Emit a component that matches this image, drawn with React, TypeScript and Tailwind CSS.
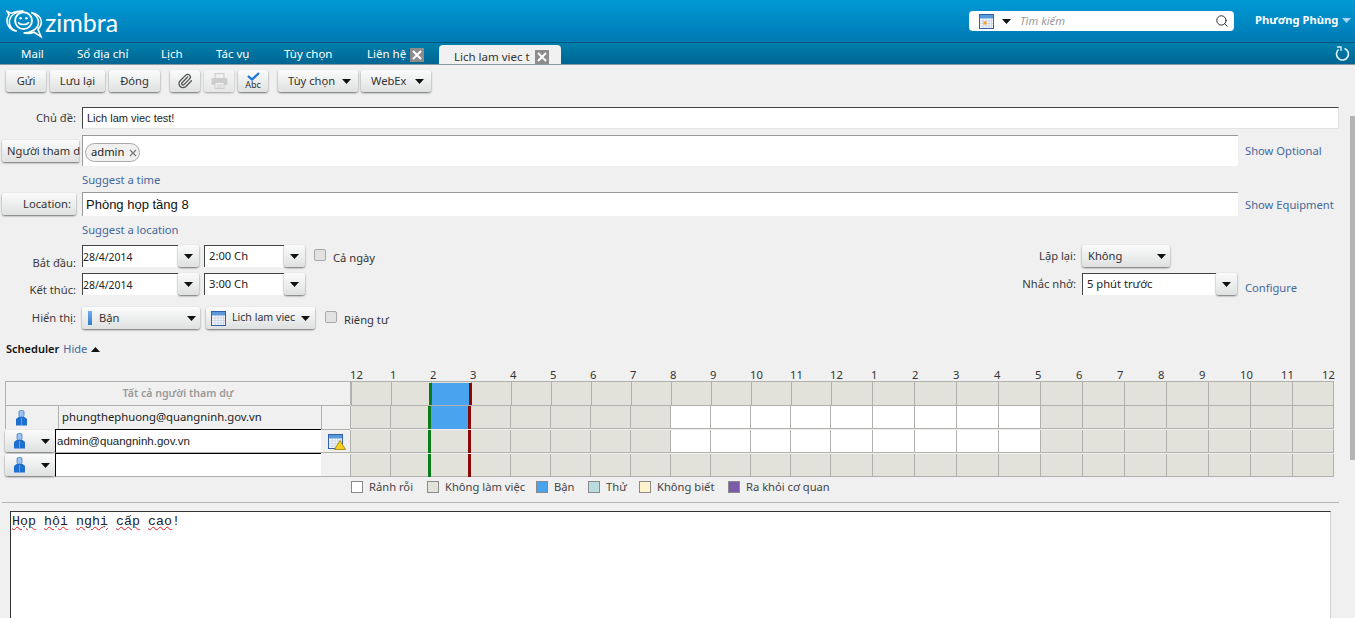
import { Paperclip, Search } from 'lucide-react'
import type { ReactNode } from 'react'

const UI = "font-['Noto_Sans',sans-serif]"

const HOURS = [
  '12', '1', '2', '3', '4', '5', '6', '7', '8', '9', '10', '11',
  '12', '1', '2', '3', '4', '5', '6', '7', '8', '9', '10', '11', '12',
]

const LEGEND = [
  { label: 'Rảnh rỗi', box: 'bg-white', width: 'w-[76px]' },
  { label: 'Không làm việc', box: 'bg-[#e3e2da]', width: 'w-[109px]' },
  { label: 'Bận', box: 'bg-[#4aa3ee]', width: 'w-[52px]' },
  { label: 'Thử', box: 'bg-[#b8dce0]', width: 'w-[51px]' },
  { label: 'Không biết', box: 'bg-[#fdf3cd]', width: 'w-[89px]' },
  { label: 'Ra khỏi cơ quan', box: 'bg-[#7a5cab]', width: 'w-[120px]' },
]

function Caret({ color = '#111' }: { color?: string }) {
  return (
    <svg width="9" height="5" viewBox="0 0 9 5" className="shrink-0">
      <polygon points="0,0 9,0 4.5,5" fill={color} />
    </svg>
  )
}

function CloseBox() {
  return (
    <span className="flex h-[14px] w-[14px] shrink-0 items-center justify-center bg-[#8c8c8c]">
      <svg width="10" height="10" viewBox="0 0 10 10">
        <path d="M1 1l8 8M9 1l-8 8" stroke="#fff" strokeWidth="2" />
      </svg>
    </span>
  )
}

function Btn({ children, className = '' }: { children: ReactNode; className?: string }) {
  return (
    <div
      className={`flex h-[22px] items-center rounded-[3px] bg-gradient-to-b from-[#fbfbfb] to-[#dfe1e1] text-[11.2px] text-[#333] shadow-[0_1px_2px_rgba(0,0,0,0.55)] ${className}`}
    >
      {children}
    </div>
  )
}

function Label({ children, className = '' }: { children: ReactNode; className?: string }) {
  return (
    <div className={`w-[76px] shrink-0 text-right text-[11.2px] leading-[16px] text-[#3a3a3a] ${className}`}>
      {children}
    </div>
  )
}

function Link({ children, className = '' }: { children: ReactNode; className?: string }) {
  return <div className={`text-[11.2px] leading-[16px] text-[#44689c] ${className}`}>{children}</div>
}

function ComboInput({ value, width, text = 'text-[11.2px] pb-[1px]' }: { value: string; width: string; text?: string }) {
  return (
    <div className="flex h-[22px] items-start">
      <div
        className={`flex h-[22px] items-center border-l border-t border-l-[#444] border-t-[#444] bg-white text-[#222] ${text} ${width}`}
      >
        {value}
      </div>
      <Btn className="w-[21px] justify-center">
        <Caret />
      </Btn>
    </div>
  )
}

function Checkbox({ className = '' }: { className?: string }) {
  return (
    <div className={`h-[12px] w-[12px] rounded-[2px] border border-[#a8a8a8] bg-[#e2e2e2] ${className}`} />
  )
}

function CalendarIcon({ size = 15, dot = false }: { size?: number; dot?: boolean }) {
  return (
    <svg width={size} height={size} viewBox="0 0 15 15" className="shrink-0">
      <rect x="0.5" y="0.5" width="14" height="14" fill="#f4f6fa" stroke="#2f62a8" />
      <rect x="1" y="1" width="13" height="3.5" fill="#5b9ad8" />
      <path d="M1 7h13M1 9.5h13M1 12h13M4 5v9M7 5v9M10 5v9M12.5 5v9" stroke="#c9d3e2" strokeWidth="0.8" />
      {dot && <rect x="4.5" y="7.5" width="3" height="3" fill="#f0a020" />}
    </svg>
  )
}

function PersonIcon() {
  return (
    <svg width="13" height="16" viewBox="0 0 13 16" className="shrink-0">
      <rect x="4" y="0.5" width="5" height="6.5" rx="1.5" fill="#9cc3ee" stroke="#3f7fc8" strokeWidth="0.8" />
      <path d="M3.5 7h6l2.5 2v6.5H1V9z" fill="#1f6fd0" />
      <path d="M6.5 8v7.5" stroke="#5ea1e8" strokeWidth="1" />
    </svg>
  )
}

function PrinterIcon() {
  return (
    <svg width="17" height="16" viewBox="0 0 17 16">
      <rect x="4" y="0.5" width="9" height="5" fill="#f0f0f0" stroke="#b5b5b5" />
      <rect x="0.5" y="5" width="16" height="7" rx="1.5" fill="#b5b5b5" />
      <rect x="4" y="9.5" width="9" height="6" fill="#f3f3f3" stroke="#b5b5b5" />
      <path d="M5.5 12h6M5.5 14h6" stroke="#b5b5b5" />
    </svg>
  )
}

function Logo() {
  return (
    <svg width="37" height="29" viewBox="0 0 38 30" fill="none" stroke="#fff" className="shrink-0">
      <path d="M1 1.5l4.5 2C9 1.2 14 .8 18 1c-7 .8-13.5 4-14.5 9.5C2.500 16 6 20.500 11 22 5.500 21.500 1 17 .8 11.500.7 8 2.200 6.200 3 5z" strokeWidth="1.6" />
      <circle cx="18" cy="11" r="8.7" strokeWidth="2" />
      <path d="M26 2.500c6 1 10.500 5 10.500 10 0 3-1.500 5.500-3.500 7.500l3 7.500-7-4.500c-3 1.200-7 1.500-11 .8 8-.2 14.500-4 15.500-10 .7-5-3-9.500-7.500-11.300z" strokeWidth="1.6" />
      <circle cx="15" cy="8.500" r="1.3" fill="#fff" stroke="none" />
      <circle cx="21" cy="8.500" r="1.3" fill="#fff" stroke="none" />
      <path d="M12.500 12.500c1.500 3.300 9.500 3.300 11 0" strokeWidth="1.6" />
    </svg>
  )
}

// header row sits 1px to the right of the rows below and absorbs it in cell 12
function ScheduleRow({
  free = false,
  busy = false,
  header = false,
}: {
  free?: boolean
  busy?: boolean
  header?: boolean
}) {
  const cells = Array.from({ length: 24 }, (_, i) => i)
  const barPos = header ? 'top-[1px] h-[22px]' : 'top-0 h-[23px]'
  return (
    <div className={`relative flex h-[24px] ${header ? 'ml-[1px]' : 'pb-[1px]'}`}>
      {cells.map((i) => {
        const isFree = free && i >= 8 && i < 17
        const w = i < 12 ? 'w-[40px]' : header && i === 12 ? 'w-[41px]' : 'w-[42px]'
        return (
          <div
            key={i}
            className={`shrink-0 border-b border-l border-[#b0b0ac] ${w} ${i === 23 ? 'border-r' : ''} ${
              isFree ? 'bg-white' : 'bg-[#e3e2da]'
            }`}
          />
        )
      })}
      {busy && <div className={`absolute left-[81px] w-[37px] bg-[#4aa3ee] ${barPos}`} />}
      <div className={`absolute left-[78px] w-[3px] bg-[#0a7d18] ${barPos}`} />
      <div className={`absolute left-[118px] w-[3px] bg-[#8b0808] ${barPos}`} />
    </div>
  )
}

function PersonButton() {
  return (
    <Btn className="mt-[1px] w-[50px] pl-[8px]">
      <PersonIcon />
      <span className="ml-[15px]">
        <Caret />
      </span>
    </Btn>
  )
}

export default function App() {
  return (
    <div className={`flex h-[618px] flex-col overflow-hidden bg-[#f0f0f0] ${UI}`}>
      {/* top bar */}
      <header className="flex h-[43px] shrink-0 items-start border-b border-[#05587f] bg-gradient-to-b from-[#0099d6] to-[#007ab3] pl-[6px]">
        <div className="mt-[10px] flex items-start">
          <Logo />
          <span className="ml-[2px] mt-[-3px] font-['Lato',sans-serif] text-[25px] leading-[30px] text-white">
            zimbra
          </span>
        </div>
        <div className="ml-auto mt-[11px] flex h-[20px] w-[265px] items-center rounded-[4px] bg-white pl-[10px] pr-[5px]">
          <CalendarIcon dot />
          <span className="ml-[8px]">
            <Caret />
          </span>
          <span className="ml-[9px] text-[11.2px] italic text-[#999]">Tìm kiếm</span>
          <Search size={14} strokeWidth={1.6} className="ml-auto text-[#222]" />
        </div>
        <span className="ml-[21px] mt-[12px] w-[87px] text-[11.2px] font-bold leading-[16px] text-white">
          Phương Phùng
        </span>
        <span className="mr-[4px] mt-[18px]">
          <Caret color="#a9d6ec" />
        </span>
      </header>

      {/* app tabs */}
      <nav className="flex h-[22px] shrink-0 items-end border-b border-[#8a9aa4] bg-gradient-to-b from-[#007fab] to-[#006593] text-[11.5px] text-white">
        <span className="mb-[2px] ml-[21px] w-[56px]">Mail</span>
        <span className="mb-[2px] w-[84px]">Sổ địa chỉ</span>
        <span className="mb-[2px] w-[55px]">Lịch</span>
        <span className="mb-[2px] w-[68px]">Tác vụ</span>
        <span className="mb-[2px] w-[83px]">Tùy chọn</span>
        <span className="mb-[2px] w-[43px]">Liên hệ</span>
        <span className="mb-[2px]">
          <CloseBox />
        </span>
        <div className="ml-[15px] flex h-[19px] w-[122px] items-center rounded-t-[4px] bg-[#f0f0f0] pl-[15px] pt-[5px] text-[#333]">
          <span className="w-[81px] whitespace-nowrap">Lich lam viec t</span>
          <CloseBox />
        </div>
        <svg width="15" height="15" viewBox="0 0 15 15" fill="none" className="mb-[3px] ml-auto mr-[5px]">
          <path d="M9.5 2.400A6 6 0 1 1 3.500 3.500" stroke="#e8f4fa" strokeWidth="1.6" />
          <path d="M2 1h4v4" stroke="#e8f4fa" strokeWidth="1.3" />
        </svg>
      </nav>

      <div className="flex min-h-0 flex-1">
        <main className="flex w-[1350px] shrink-0 flex-col">
          {/* toolbar */}
          <div className="mt-[5px] flex h-[22px] items-center pl-[6px]">
            <Btn className="w-[40px] justify-center">Gửi</Btn>
            <Btn className="ml-[4px] w-[55px] justify-center">Lưu lại</Btn>
            <Btn className="ml-[4px] w-[51px] justify-center">Đóng</Btn>
            <Btn className="ml-[10px] w-[30px] justify-center">
              <Paperclip size={16} className="text-[#555]" />
            </Btn>
            <Btn className="ml-[4px] w-[30px] justify-center opacity-60">
              <PrinterIcon />
            </Btn>
            <Btn className="ml-[4px] w-[30px] flex-col justify-center">
              <svg width="13" height="9" viewBox="0 0 13 9" className="mb-[-2px]">
                <path d="M1 4l4 3.500L12 1" fill="none" stroke="#1a73dd" strokeWidth="2.2" />
              </svg>
              <span className="text-[9px] leading-[11px]">Abc</span>
            </Btn>
            <Btn className="ml-[10px] w-[80px] justify-between pl-[10px] pr-[7px]">
              <span>Tùy chọn</span>
              <Caret />
            </Btn>
            <Btn className="ml-[3px] w-[70px] justify-between pl-[10px] pr-[7px]">
              <span>WebEx</span>
              <Caret />
            </Btn>
          </div>

          {/* subject */}
          <div className="mt-[15px] flex h-[22px] items-center gap-[6px]">
            <Label>Chủ đề:</Label>
            <div className="flex h-[22px] w-[1257px] items-center border border-[#e3e3e3] border-l-[#444] border-t-[#444] bg-white pl-[4px] font-['Liberation_Sans',sans-serif] text-[11px] text-[#222]">
              Lich lam viec test!
            </div>
          </div>

          {/* attendees */}
          <div className="mt-[6px] flex h-[31px] items-start">
            <Btn className="ml-[2px] mt-[5px] w-[77px] rounded-r-none whitespace-nowrap pl-[5px]">Người tham d</Btn>
            <div className="ml-[3px] flex h-[31px] w-[1156px] items-start border-l border-t border-[#999] bg-white pl-[2px] pt-[7px]">
              <div className="flex h-[19px] w-[55px] items-center rounded-[10px] border border-[#aaa] bg-[#f0f0f0] pl-[5px] text-[11.2px] text-[#222]">
                admin
                <svg width="8" height="8" viewBox="0 0 8 8" className="ml-[5px]">
                  <path d="M1 1l6 6M7 1L1 7" stroke="#777" strokeWidth="1.2" />
                </svg>
              </div>
            </div>
            <Link className="ml-[7px] mt-[8px]">Show Optional</Link>
          </div>
          <Link className="ml-[82px] mt-[6px]">Suggest a time</Link>

          {/* location */}
          <div className="mt-[4px] flex h-[24px] items-start">
            <Btn className="ml-[2px] mt-[1px] w-[74px] justify-end pr-[5px]">Location:</Btn>
            <div className="ml-[6px] flex h-[24px] w-[1156px] items-center border-l border-t border-[#999] bg-white pl-[3px] font-['Liberation_Sans',sans-serif] text-[13px] text-[#111]">
              Phòng họp tầng 8
            </div>
            <Link className="ml-[7px] mt-[5px]">Show Equipment</Link>
          </div>
          <Link className="ml-[82px] mt-[6px]">Suggest a location</Link>

          {/* dates */}
          <div className="mt-[7px] flex h-[22px] items-start">
            <div className="flex w-[1000px] items-start">
              <Label className="pt-[10px]">Bắt đầu:</Label>
              <div className="ml-[6px]">
                <ComboInput value="28/4/2014" width="w-[96px]" text="pt-[2px] text-[10.4px]" />
              </div>
              <div className="ml-[5px]">
                <ComboInput value="2:00 Ch" width="w-[80px] pl-[4px]" />
              </div>
              <Checkbox className="ml-[9px] mt-[4px]" />
              <span className="ml-[7px] mt-[5px] text-[11.2px] leading-[16px] text-[#333]">Cả ngày</span>
            </div>
            <Label className="pt-[3px]">Lặp lại:</Label>
            <Btn className="ml-[6px] w-[88px] justify-between pl-[6px] pr-[4px]">
              <span>Không</span>
              <Caret />
            </Btn>
          </div>
          <div className="mt-[6px] flex h-[22px] items-start">
            <div className="flex w-[1000px] items-start">
              <Label className="pt-[9px]">Kết thúc:</Label>
              <div className="ml-[6px]">
                <ComboInput value="28/4/2014" width="w-[96px]" text="pt-[2px] text-[10.4px]" />
              </div>
              <div className="ml-[5px]">
                <ComboInput value="3:00 Ch" width="w-[80px] pl-[4px]" />
              </div>
            </div>
            <Label className="pt-[3px]">Nhắc nhở:</Label>
            <div className="ml-[6px]">
              <ComboInput value="5 phút trước" width="w-[134px] pl-[4px]" />
            </div>
            <Link className="ml-[8px] mt-[7px]">Configure</Link>
          </div>
          <div className="mt-[12px] flex h-[22px] items-start">
            <Label className="pt-[3px]">Hiển thị:</Label>
            <Btn className="ml-[6px] w-[118px] pl-[6px] pr-[4px]">
              <span className="h-[14px] w-[4px] bg-gradient-to-b from-[#6fb0ee] to-[#2e7cc8]" />
              <span className="ml-[7px]">Bận</span>
              <span className="ml-auto">
                <Caret />
              </span>
            </Btn>
            <Btn className="ml-[6px] w-[109px] pl-[5px] pr-[5px]">
              <CalendarIcon />
              <span className="ml-[6px] whitespace-nowrap text-[10.6px]">Lich lam viec</span>
              <span className="ml-auto">
                <Caret />
              </span>
            </Btn>
            <Checkbox className="ml-[10px] mt-[4px]" />
            <span className="ml-[7px] mt-[5px] text-[11.2px] leading-[16px] text-[#333]">Riêng tư</span>
          </div>

          {/* scheduler */}
          <div className="ml-[6px] mt-[12px] flex h-[16px] items-center text-[11px]">
            <span className="font-semibold text-[#111]">Scheduler</span>
            <span className="ml-[4px] text-[#44689c]">Hide</span>
            <span className="ml-[4px] rotate-180">
              <Caret />
            </span>
          </div>

          <div className="ml-[350px] mt-[12px] flex h-[12px] items-center text-[11.2px] leading-[12px] text-[#333]">
            {HOURS.map((h, i) => (
              <span key={i} className={`shrink-0 ${i < 12 ? 'w-[40px]' : 'w-[41px]'}`}>
                {h}
              </span>
            ))}
          </div>

          <div className="ml-[5px] flex">
            <div className="w-[345px] shrink-0">
              <div className="flex h-[24px] w-[346px] items-center justify-center border border-b-0 border-[#b0b0ac] pt-[1px] text-[10.6px] font-semibold text-[#9a9a9a]">
                Tất cả người tham dự
              </div>
              <div className="flex h-[24px] border-l border-t border-[#b0b0ac] text-[11.3px] text-[#222]">
                <div className="flex w-[53px] items-center justify-center border-r border-[#b0b0ac] pr-[21px]">
                  <PersonIcon />
                </div>
                <div className="flex w-[263px] items-center border-r border-[#b0b0ac] pl-[3px]">
                  phungthephuong@quangninh.gov.vn
                </div>
              </div>
              <div className="flex h-[24px]">
                <PersonButton />
                <div className="flex h-[24px] w-[266px] items-center border-b border-l border-t border-[#b0b0ac] border-l-black border-t-black bg-white pl-[1px] pt-[1px] font-['Liberation_Sans',sans-serif] text-[11.5px] text-[#222]">
                  admin@quangninh.gov.vn
                </div>
                <div className="flex h-[24px] w-[29px] items-center justify-center border-b border-t border-[#b0b0ac]">
                  <span className="relative">
                    <CalendarIcon />
                    <svg width="12" height="10" viewBox="0 0 12 10" className="absolute bottom-[-1px] right-[-3px]">
                      <polygon points="6,0.5 11.5,9.5 .5,9.5" fill="#f5d020" stroke="#9a7b00" strokeWidth="0.8" />
                    </svg>
                  </span>
                </div>
              </div>
              <div className="flex h-[24px]">
                <PersonButton />
                <div className="h-[24px] w-[266px] border-b border-l border-t border-[#b0b0ac] border-l-black border-t-black bg-white" />
                <div className="h-[24px] w-[29px] border-b border-[#b0b0ac]" />
              </div>
            </div>
            <div>
              <div className="border-t border-[#b0b0ac]" />
              <ScheduleRow busy header />
              <ScheduleRow busy free />
              <ScheduleRow free />
              <ScheduleRow />
            </div>
          </div>

          {/* legend */}
          <div className="ml-[351px] mt-[3px] flex h-[12px] items-center">
            {LEGEND.map((item) => (
              <div key={item.label} className={`flex shrink-0 items-center gap-[6px] ${item.width}`}>
                <span className={`h-[12px] w-[12px] shrink-0 border border-[#8a8a8a] ${item.box}`} />
                <span className="whitespace-nowrap text-[11.2px] text-[#444]">{item.label}</span>
              </div>
            ))}
          </div>

          <div className="ml-[2px] mt-[9px] w-[1337px] border-t border-[#b5b5b5]" />

          {/* notes */}
          <div className="ml-[10px] mt-[8px] w-[1321px] flex-1 border-l border-r border-t border-[#333] border-r-[#cfcfcf] bg-white pl-[1px] pt-[2px] font-['Liberation_Mono',monospace] text-[13.33px] leading-[16px] text-[#222]">
            {['Họp', 'hội', 'nghị', 'cấp', 'cao'].map((word) => (
              <span key={word}>
                <span className="underline decoration-[#e02020] decoration-wavy decoration-1">{word}</span>
                {word === 'cao' ? '!' : ' '}
              </span>
            ))}
          </div>
        </main>

        {/* scrollbar */}
        <div className="flex w-[5px] shrink-0 flex-col">
          <div className="mt-[51px] h-[344px] bg-[#b4b4b4]" />
        </div>
      </div>
    </div>
  )
}
